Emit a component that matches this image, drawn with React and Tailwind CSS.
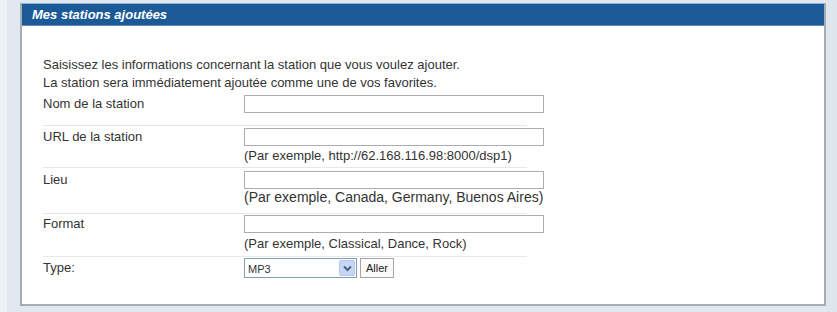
import { useState } from "react";

const Field = ({ value, onChange }) => (
  <input
    type="text"
    value={value}
    onChange={onChange}
    className="block w-[300px] h-[18px] border border-[#a9acb1] bg-white px-1 text-[12px] outline-none"
  />
);

const App = () => {
  const [nom, setNom] = useState("");
  const [url, setUrl] = useState("");
  const [lieu, setLieu] = useState("");
  const [format, setFormat] = useState("");
  const [type, setType] = useState("MP3");

  return (
    <div
      className="flex h-[312px] w-[837px] bg-[#e2e8ef] text-[#333]"
      style={{ fontFamily: '"Liberation Sans", Arial, sans-serif' }}
    >
      <div className="w-[7px] bg-[#eef2f6]"></div>
      <div className="w-[13px]"></div>

      <div className="mt-[3px] flex h-[303px] w-[806px] flex-col border-x-2 border-b-2 border-[#a4acb4] bg-white">
        <div className="flex h-[23px] items-center border-t border-b border-t-[#8fb1d2] border-b-[#5f8cba] bg-[#1c5a97] pl-[10px] pt-[1px]">
          <span className="text-[13px] font-bold italic text-white">Mes stations ajoutées</span>
        </div>

        <div className="pl-[21px] pt-[30px]">
          <p className="text-[13px] leading-[18px]">
            Saisissez les informations concernant la station que vous voulez ajouter.
            <br />
            La station sera immédiatement ajoutée comme une de vos favorites.
          </p>

          <div className="flex w-[484px] border-b border-[#e6e8ea] pt-[3px] pb-[12px] text-[13px]">
            <div className="w-[201px] shrink-0 leading-[18px]">Nom de la station</div>
            <div className="w-[300px] shrink-0">
              <Field value={nom} onChange={(e) => setNom(e.target.value)} />
            </div>
          </div>

          <div className="flex w-[484px] border-b border-[#e6e8ea] pt-[2px] pb-[4px] text-[13px]">
            <div className="w-[201px] shrink-0 leading-[18px]">URL de la station</div>
            <div className="w-[300px] shrink-0">
              <Field value={url} onChange={(e) => setUrl(e.target.value)} />
              <div className="mt-[2px] whitespace-nowrap leading-[15px]">
                (Par exemple, http://62.168.116.98:8000/dsp1)
              </div>
            </div>
          </div>

          <div className="flex w-[484px] border-b border-[#e6e8ea] pt-[3px] pb-[8px] text-[13px]">
            <div className="w-[201px] shrink-0 leading-[18px]">Lieu</div>
            <div className="w-[300px] shrink-0">
              <Field value={lieu} onChange={(e) => setLieu(e.target.value)} />
              <div className="whitespace-nowrap text-[14px] leading-[16px]">
                (Par exemple, Canada, Germany, Buenos Aires)
              </div>
            </div>
          </div>

          <div className="flex w-[484px] border-b border-[#e6e8ea] pt-[1px] pb-[5px] text-[13px]">
            <div className="w-[201px] shrink-0 leading-[18px]">Format</div>
            <div className="w-[300px] shrink-0">
              <Field value={format} onChange={(e) => setFormat(e.target.value)} />
              <div className="mt-[4px] whitespace-nowrap leading-[14px]">
                (Par exemple, Classical, Dance, Rock)
              </div>
            </div>
          </div>

          <div className="flex w-[484px] pt-[1px] text-[13px]">
            <div className="w-[201px] shrink-0 leading-[19px]">Type:</div>
            <div className="flex items-center gap-[3px]">
              <div className="relative h-[20px] w-[113px] border border-[#7f9db9] bg-white">
                <select
                  value={type}
                  onChange={(e) => setType(e.target.value)}
                  className="h-full w-full appearance-none bg-transparent pl-[3px] text-[11px] outline-none"
                >
                  <option>MP3</option>
                  <option>AAC</option>
                  <option>OGG</option>
                  <option>WMA</option>
                </select>
                <div className="pointer-events-none absolute right-[1px] top-[1px] flex h-[16px] w-[16px] items-center justify-center rounded-[2px] border border-[#b5c8e6] bg-[#c6d7f5]">
                  <svg width="9" height="7" viewBox="0 0 9 7">
                    <path d="M1 1.5 L4.5 5 L8 1.5" fill="none" stroke="#4d6185" strokeWidth="2" />
                  </svg>
                </div>
              </div>
              <button
                type="button"
                className="h-[20px] border border-[#a6a6a6] bg-[#fbfbfb] px-[5px] text-[11px] leading-[18px] text-[#222]"
              >
                Aller
              </button>
            </div>
          </div>
        </div>
      </div>

      <div className="flex-1 bg-[#dfe6ed]"></div>
    </div>
  );
};

export default App;
